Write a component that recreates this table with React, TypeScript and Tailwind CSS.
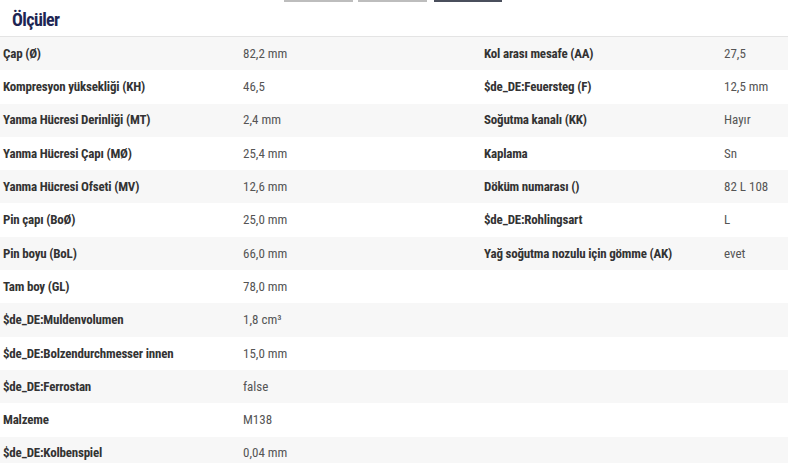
const rows: [string, string, string?, string?][] = [
  ['Çap (Ø)', '82,2 mm', 'Kol arası mesafe (AA)', '27,5'],
  ['Kompresyon yüksekliği (KH)', '46,5', '$de_DE:Feuersteg (F)', '12,5 mm'],
  ['Yanma Hücresi Derinliği (MT)', '2,4 mm', 'Soğutma kanalı (KK)', 'Hayır'],
  ['Yanma Hücresi Çapı (MØ)', '25,4 mm', 'Kaplama', 'Sn'],
  ['Yanma Hücresi Ofseti (MV)', '12,6 mm', 'Döküm numarası ()', '82 L 108'],
  ['Pin çapı (BoØ)', '25,0 mm', '$de_DE:Rohlingsart', 'L'],
  ['Pin boyu (BoL)', '66,0 mm', 'Yağ soğutma nozulu için gömme (AK)', 'evet'],
  ['Tam boy (GL)', '78,0 mm'],
  ['$de_DE:Muldenvolumen', '1,8 cm³'],
  ['$de_DE:Bolzendurchmesser innen', '15,0 mm'],
  ['$de_DE:Ferrostan', 'false'],
  ['Malzeme', 'M138'],
  ['$de_DE:Kolbenspiel', '0,04 mm'],
]

const font = { fontFamily: '"Roboto Condensed", "Liberation Sans Narrow", Roboto, sans-serif' }

export default function App() {
  return (
    <div className="w-[788px] h-[463px] overflow-hidden bg-white relative" style={font}>
      <div className="absolute top-0 left-[284px] flex gap-[5px]">
        <div className="w-[69px] h-[2px] bg-[#bdbdbd]" />
        <div className="w-[69px] h-[2px] bg-[#bdbdbd]" />
        <div className="w-[68px] h-[2px] bg-[#4a4f5c] ml-[2px]" />
      </div>
      <div className="h-[37px] border-b border-[#e4e4e4] pl-[12px] pt-[9px]">
        <h2 className="text-[18px] leading-[22px] font-bold tracking-[-0.6px] text-[#1d2553]">Ölçüler</h2>
      </div>
      {rows.map(([l1, v1, l2, v2], i) => (
        <div
          key={i}
          className={`grid grid-cols-[240px_241px_240px_1fr] items-center h-[33.3px] pl-[3px] text-[13px] ${i % 2 === 0 ? 'bg-[#f7f7f7]' : 'bg-white'}`}
        >
          <div className="font-bold tracking-[-0.2px] text-[#333]">{l1}</div>
          <div className="text-[#555]">{v1}</div>
          <div className="font-bold tracking-[-0.2px] text-[#333]">{l2}</div>
          <div className="text-[#555]">{v2}</div>
        </div>
      ))}
    </div>
  )
}
